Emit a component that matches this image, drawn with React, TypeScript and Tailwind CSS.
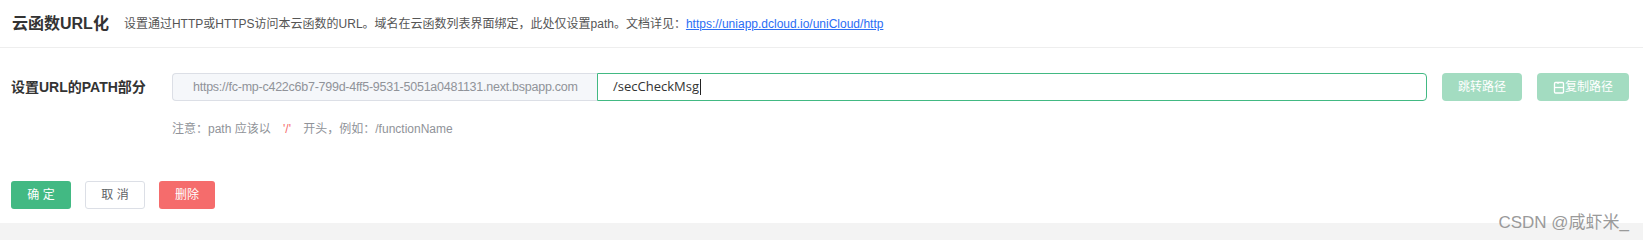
import React from "react";

const sans = "font-['Liberation_Sans','Noto_Sans_CJK_SC',sans-serif]";

function CopyIcon() {
  return (
    <svg width="12" height="13" viewBox="0 0 12 13" fill="none" stroke="currentColor" strokeWidth="1.3">
      <rect x="1.5" y="1.5" width="9" height="10.5" rx="1" />
      <path d="M1.5 6.5h9" />
      <path d="M5 1v2" />
    </svg>
  );
}

export default function App() {
  return (
    <div className={`relative w-[1643px] h-[241px] bg-white ${sans}`}>
      <header className="flex h-[48px] items-center border-b border-[#eeeeee] pl-[12px]">
        <h1 className="text-[16px] font-bold text-[#333333]">云函数URL化</h1>
        <p className="ml-[15px] text-[12px] text-[#555555]">
          设置通过HTTP或HTTPS访问本云函数的URL。域名在云函数列表界面绑定，此处仅设置path。文档详见：
          <a href="#" className="text-[#2b6ef5] underline">
            https://uniapp.dcloud.io/uniCloud/http
          </a>
        </p>
      </header>

      <section className="pl-[11px] pt-[25px]">
        <div className="flex h-[28px] items-center">
          <label className="w-[161px] text-[14px] font-bold text-[#333333]">设置URL的PATH部分</label>
          <div className="flex h-[28px] w-[425px] items-center overflow-hidden whitespace-nowrap rounded-l-[4px] border border-r-0 border-[#dcdfe6] bg-[#f5f7fa] pl-[20px] text-[12.5px] tracking-[-0.25px] text-[#909399]">
            https://fc-mp-c422c6b7-799d-4ff5-9531-5051a0481131.next.bspapp.com
          </div>
          <div className="flex h-[28px] w-[830px] items-center rounded-r-[4px] border border-[#42b983] pl-[15px] font-['Open_Sans',sans-serif] text-[13px] text-[#333333]">
            /secCheckMsg
            <span className="ml-[1px] h-[16px] w-px bg-[#222222]" />
          </div>
          <button className="ml-[15px] flex h-[28px] w-[80px] items-center justify-center rounded-[4px] bg-[#a3dcc1] text-[12px] text-white">
            跳转路径
          </button>
          <button className="ml-[15px] flex h-[28px] w-[92px] items-center justify-center rounded-[4px] bg-[#a3dcc1] text-[12px] text-white">
            <CopyIcon />
            复制路径
          </button>
        </div>

        <p className="ml-[161px] mt-[18px] text-[12px] leading-[20px] text-[#909399]">
          注意：path 应该以 <span className="mx-[9px] text-[#f56c6c]">'/'</span> 开头，例如：/functionName
        </p>

        <div className="mt-[42px] flex items-center gap-[14px]">
          <button className="h-[28px] w-[60px] rounded-[3px] bg-[#42b983] text-[12px] text-white">确 定</button>
          <button className="h-[28px] w-[60px] rounded-[3px] border border-[#dcdfe6] bg-white text-[12px] text-[#606266]">
            取 消
          </button>
          <button className="h-[28px] w-[56px] rounded-[3px] bg-[#f56c6c] text-[12px] text-white">删除</button>
        </div>
      </section>

      <div className="mt-[14px] h-[17px] bg-[#f3f3f3]" />

      <span className="absolute right-[14px] top-[214px] text-[17px] leading-[17px] text-[#9a9a9a]">CSDN @咸虾米_</span>
    </div>
  );
}
